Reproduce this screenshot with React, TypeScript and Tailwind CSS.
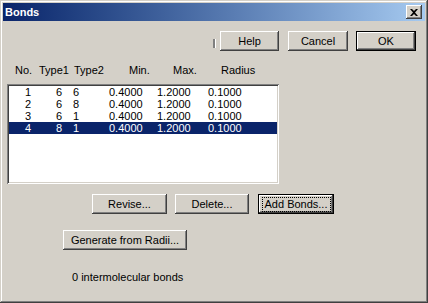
import React from "react"

const raised =
  "shadow-[inset_-1px_-1px_#404040,inset_1px_1px_#ffffff,inset_-2px_-2px_#808080,inset_2px_2px_#d4d0c8]"

function Btn({
  label,
  w,
  isDefault,
  focus,
}: {
  label: string
  w: string
  isDefault?: boolean
  focus?: boolean
}) {
  return (
    <div className={`${w} h-[20px] shrink-0 ${isDefault ? "border border-black" : ""}`}>
      <div className={`w-full h-full flex items-center justify-center bg-[#d4d0c8] ${raised}`}>
        {focus ? (
          <span className="border border-dotted border-black px-[2px] leading-[13px]">{label}</span>
        ) : (
          <span>{label}</span>
        )}
      </div>
    </div>
  )
}

const rows = [
  ["1", "6", "6", "0.4000", "1.2000", "0.1000"],
  ["2", "6", "8", "0.4000", "1.2000", "0.1000"],
  ["3", "6", "1", "0.4000", "1.2000", "0.1000"],
  ["4", "8", "1", "0.4000", "1.2000", "0.1000"],
]

export default function App() {
  return (
    <div
      className="w-[428px] h-[303px] bg-[#d4d0c8] p-[3px] text-[11px] text-black shadow-[inset_-1px_-1px_#404040,inset_1px_1px_#d4d0c8,inset_-2px_-2px_#808080,inset_2px_2px_#ffffff] overflow-hidden"
      style={{ fontFamily: '"Liberation Sans", Arial, sans-serif' }}
    >
      {/* title bar */}
      <div className="h-[18px] flex items-center justify-between bg-gradient-to-r from-[#0a246a] to-[#a6caf0] pl-[2px] pr-[3px]">
        <span className="text-white font-bold text-[11px] leading-none">Bonds</span>
        <div className={`w-[16px] h-[14px] bg-[#d4d0c8] flex items-center justify-center ${raised}`}>
          <svg width="8" height="7" viewBox="0 0 8 7">
            <path d="M0 0h2l2 2 2-2h2L5 3.5 8 7H6L4 5 2 7H0l3-3.5z" fill="#000" />
          </svg>
        </div>
      </div>

      {/* top buttons */}
      <div className="flex items-center mt-[10px] h-[20px]">
        <div className="ml-[210px] w-[3px] h-[9px] mt-[4px] border-l-2 border-[#808080] border-r border-r-white" />
        <div className="ml-[4px]">
          <Btn label="Help" w="w-[59px]" />
        </div>
        <div className="ml-[9px]">
          <Btn label="Cancel" w="w-[60px]" />
        </div>
        <div className="ml-[8px]">
          <Btn label="OK" w="w-[60px]" isDefault />
        </div>
      </div>

      {/* headers */}
      <div className="flex mt-[13px] ml-[12px] leading-[13px]">
        <span className="w-[24px]">No.</span>
        <span className="w-[35px]">Type1</span>
        <span className="w-[55px]">Type2</span>
        <span className="w-[44px]">Min.</span>
        <span className="w-[48px]">Max.</span>
        <span>Radius</span>
      </div>

      {/* list */}
      <div className="mt-[7px] ml-[4px] w-[272px] h-[100px] bg-white p-[2px] shadow-[inset_1px_1px_#808080,inset_-1px_-1px_#ffffff,inset_2px_2px_#404040,inset_-2px_-2px_#d4d0c8]">
        {rows.map((r, i) => (
          <div
            key={i}
            className={`flex h-[12px] leading-[12px] ${i === 3 ? "bg-[#0a246a] text-white" : ""}`}
          >
            <span className="w-[22px] text-right">{r[0]}</span>
            <span className="w-[31px] text-right">{r[1]}</span>
            <span className="w-[47px] pl-[11px]">{r[2]}</span>
            <span className="w-[48px]">{r[3]}</span>
            <span className="w-[51px]">{r[4]}</span>
            <span>{r[5]}</span>
          </div>
        ))}
      </div>

      {/* action buttons */}
      <div className="flex mt-[10px] ml-[89px]">
        <Btn label="Revise..." w="w-[75px]" />
        <div className="ml-[8px]">
          <Btn label="Delete..." w="w-[74px]" />
        </div>
        <div className="ml-[9px]">
          <Btn label="Add Bonds..." w="w-[76px]" isDefault focus />
        </div>
      </div>

      <div className="flex mt-[16px] ml-[60px]">
        <Btn label="Generate from Radii..." w="w-[124px]" />
      </div>

      <div className="mt-[21px] ml-[69px] leading-[13px]">0 intermolecular bonds</div>
    </div>
  )
}
